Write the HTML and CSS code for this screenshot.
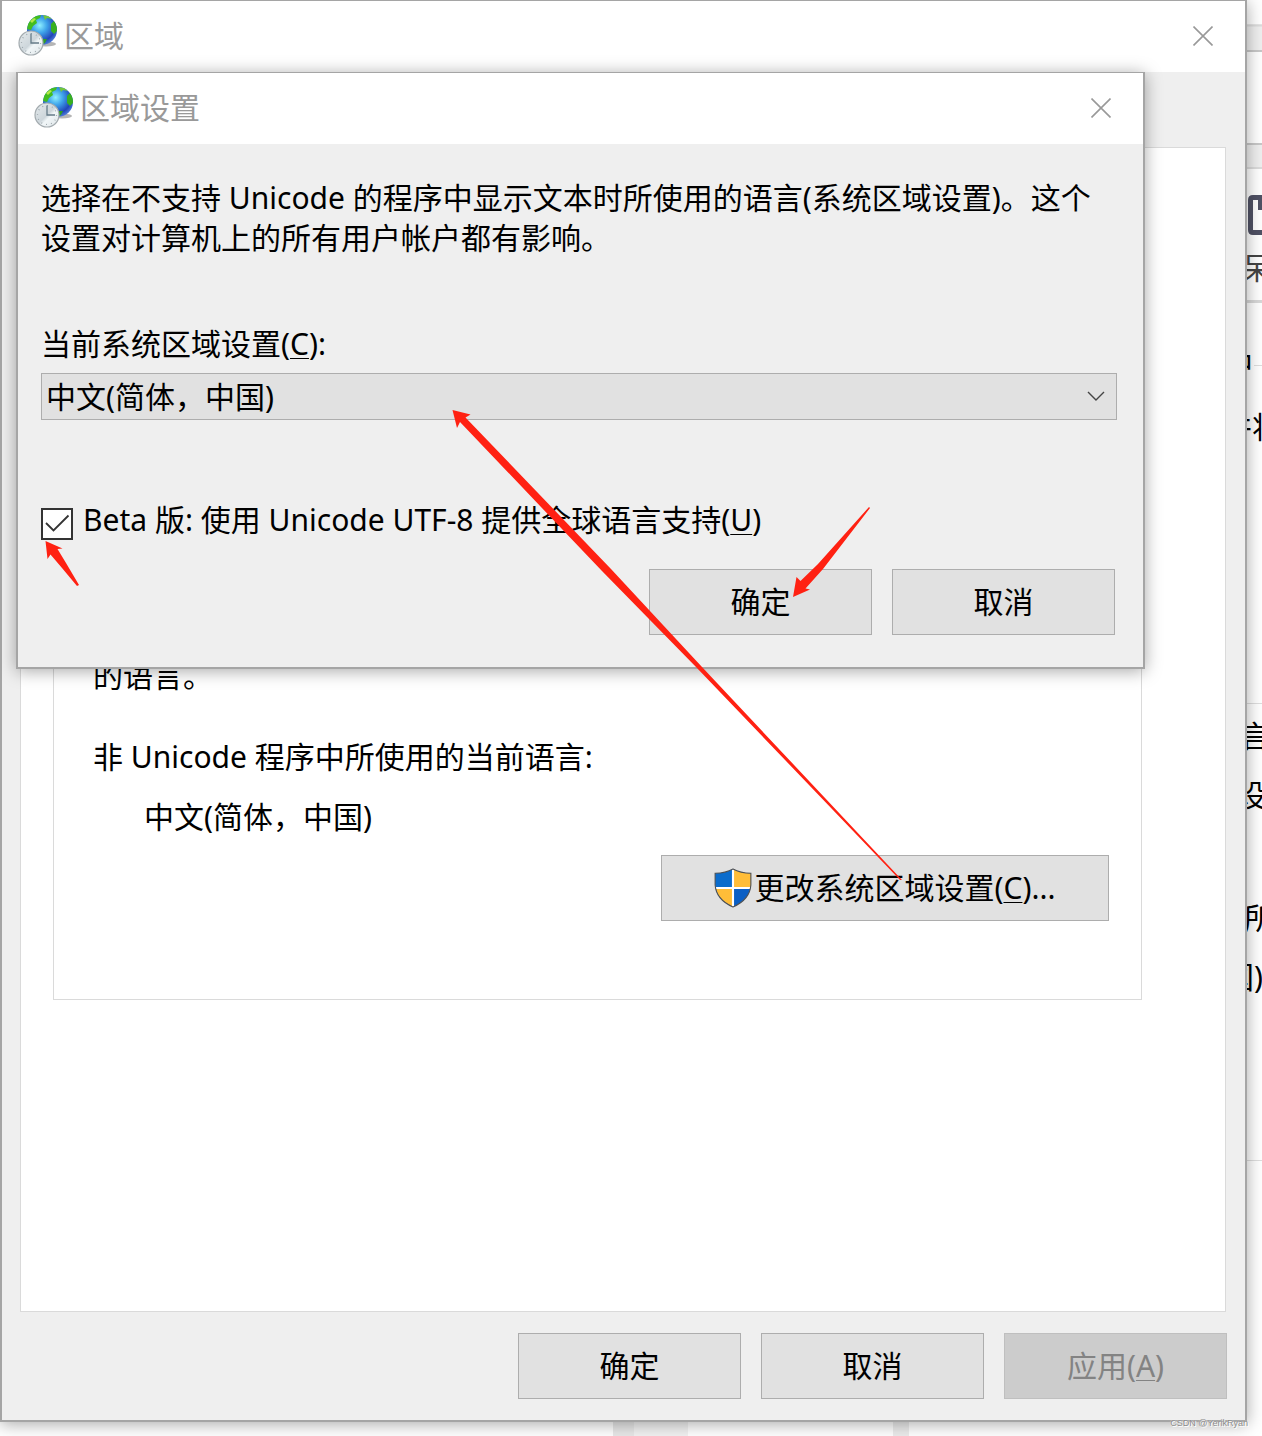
FILE: index.html
```html
<!DOCTYPE html>
<html lang="zh-CN">
<head>
    <meta charset="UTF-8">
    <meta name="viewport" content="width=device-width, initial-scale=1.0">
    <title>区域</title>
    <link rel="stylesheet" href="styles.css">
</head>
<body>
    <svg width="0" height="0" class="defs" aria-hidden="true">
        <defs>
            <radialGradient id="sea" cx="0.42" cy="0.35" r="0.7">
                <stop offset="0" stop-color="#8ff0ff"/>
                <stop offset="0.35" stop-color="#3fa4ea"/>
                <stop offset="0.75" stop-color="#2145b8"/>
                <stop offset="1" stop-color="#5b8be0"/>
            </radialGradient>
            <linearGradient id="face" x1="0" y1="0" x2="1" y2="1">
                <stop offset="0" stop-color="#e6ebed"/>
                <stop offset="0.5" stop-color="#cdd6db"/>
                <stop offset="0.6" stop-color="#f1f6f8"/>
                <stop offset="1" stop-color="#dde4e7"/>
            </linearGradient>
            <clipPath id="ball"><circle cx="24" cy="15" r="15"/></clipPath>
        </defs>
        <symbol id="globe" viewBox="0 0 40 41">
            <ellipse cx="28" cy="29" rx="10" ry="2.5" fill="#b5b5b5"/>
            <circle cx="24" cy="15" r="15" fill="url(#sea)"/>
            <g clip-path="url(#ball)">
                <path d="M9 14 L10 6 L17 1 L23 0 L22 3 L18 5 L19 8 L15 11 L13 15 Z" fill="#43bd1f"/>
                <path d="M25 0 L31 1 L34 4 L29 3 L27 5 Z" fill="#73c63c"/>
                <path d="M33 9 L36 6 L39 10 L39 16 L36 19 L33 16 Z" fill="#38b020"/>
                <path d="M24 24 L29 24 L27 28 L23 30 Z" fill="#2f9e28"/>
                <path d="M12 6 L16 3 L18 4 L14 8 Z" fill="#b3e846"/>
            </g>
            <circle cx="13" cy="28" r="12" fill="url(#face)" stroke="#a3abaf" stroke-width="1.2"/>
            <circle cx="13" cy="28" r="9.5" fill="none" stroke="#8d999f" stroke-width="1.2" stroke-dasharray="0.8 4.17"/>
            <path d="M13 18.5 V28 H21" fill="none" stroke="#657b88" stroke-width="1.3"/>
        </symbol>
        <symbol id="close" viewBox="0 0 20 20">
            <path d="M0.5 0.5 L19.5 19.5 M19.5 0.5 L0.5 19.5" fill="none" stroke="#999" stroke-width="1.6"/>
        </symbol>
    </svg>

    <div class="desktop">
        <!-- page behind the windows -->
        <svg class="behind" width="1262" height="1436" aria-hidden="true">
            <rect x="1240" y="24" width="22" height="28" fill="#efefef"/>
            <path d="M1240 25.5 H1262 M1240 168 H1262" stroke="#dcdcdc" stroke-width="2"/>
            <path d="M1240 51 H1262 M1240 144 H1262" stroke="#c8c8c8" stroke-width="2"/>
            <rect x="1240" y="145" width="22" height="22" fill="#efefef"/>
            <path d="M1270 197.500 H1253 Q1250.500 197.500 1250.500 200 V230 Q1250.500 232.500 1253 232.500 H1270" fill="none" stroke="#505265" stroke-width="5"/>
            <rect x="1258" y="198" width="4" height="12" fill="#505265"/>
            <path d="M1240 301.500 H1262" stroke="#d8d8d8" stroke-width="3"/>
            <path d="M1254 365.500 H1262 M1240 703.500 H1262 M1240 1160.500 H1262" stroke="#dedede"/>
            <text x="1242" y="279" fill="#444">呆</text>
            <text x="1223" y="375">中</text>
            <text x="1222" y="438">并将</text>
            <text x="1240" y="747">言</text>
            <text x="1236" y="806">设</text>
            <text x="1244" y="929">所</text>
            <text x="1224" y="988">国)</text>
            <rect x="613" y="1415" width="75" height="21" fill="#f2f2f2"/>
            <rect x="613" y="1415" width="21" height="21" fill="#e8e8e8"/>
            <rect x="893" y="1415" width="16" height="21" fill="#ececec"/>
        </svg>

        <main class="window">
            <header class="titlebar">
                <svg class="app-icon"><use href="#globe"/></svg>
                <h1>区域</h1>
                <button class="close" aria-label="关闭"><svg><use href="#close"/></svg></button>
            </header>
            <div class="window-body">
                <section class="tab-page">
                    <div class="group">
                        <p>的语言。</p>
                        <p class="current">非 Unicode 程序中所使用的当前语言:</p>
                        <p class="value">中文(简体，中国)</p>
                        <button class="button wide">
                            <svg class="shield" viewBox="0 0 36 38">
                                <path d="M18 1 Q11 5 1 5 V16 Q2 30 18 37 Z" fill="#0b6ccc"/>
                                <path d="M18 1 Q25 5 35 5 V16 Q34 30 18 37 Z" fill="#0b5fc4"/>
                                <path d="M18 1 Q25 5 35 5 V19 H18 Z M18 19 V37 Q4 31 1.500 19 Z" fill="#ffbd38"/>
                                <path d="M18 1 V37 M1 19 H35" stroke="#fff" stroke-width="2"/>
                                <path d="M18 1 Q11 5 1 5 V16 Q2 30 18 37 Q34 30 35 16 V5 Q25 5 18 1 Z" fill="none" stroke="#4c5055"/>
                            </svg>
                            <span>更改系统区域设置(<u>C</u>)...</span>
                        </button>
                    </div>
                </section>
                <div class="actions">
                    <button class="button">确定</button>
                    <button class="button">取消</button>
                    <button class="button" disabled>应用(<u>A</u>)</button>
                </div>
            </div>
        </main>

        <section class="window dialog" role="dialog" aria-labelledby="dialog-title">
            <header class="titlebar">
                <svg class="app-icon"><use href="#globe"/></svg>
                <h2 id="dialog-title">区域设置</h2>
                <button class="close" aria-label="关闭"><svg><use href="#close"/></svg></button>
            </header>
            <div class="dialog-body">
                <p>选择在不支持 Unicode 的程序中显示文本时所使用的语言(系统区域设置)。这个设置对计算机上的所有用户帐户都有影响。</p>
                <label class="field-label" for="locale">当前系统区域设置(<u>C</u>):</label>
                <div class="select-wrap">
                    <select id="locale">
                        <option>中文(简体，中国)</option>
                    </select>
                    <svg class="chevron" viewBox="0 0 18 10"><path d="M1 1 L9 9 L17 1" fill="none" stroke="#444" stroke-width="1.4"/></svg>
                </div>
                <div class="check-row">
                    <span class="check-wrap">
                        <input type="checkbox" id="utf8" checked>
                        <svg class="tick" viewBox="0 0 32 32"><path d="M5 15 L12.500 22.500 L27.500 7.500" fill="none" stroke="#333" stroke-width="1.8"/></svg>
                    </span>
                    <label for="utf8">Beta 版: 使用 Unicode UTF-8 提供全球语言支持(<u>U</u>)</label>
                </div>
                <div class="actions">
                    <button class="button">确定</button>
                    <button class="button">取消</button>
                </div>
            </div>
        </section>

        <!-- red pointer arrows -->
        <svg class="arrows" width="1262" height="1436" aria-hidden="true">
            <path d="M452.500 410 L470.500 414.500 L465.500 417.500 L611 569 L702 667 L902 880 L900 880 L696 667 L602 571 L460 422 L457 428 Z"/>
            <path d="M45.500 541 L62.500 548.500 L57.500 549 L66 563 L79 585 L77 586 L62 568 L50.500 554.500 L47.500 559 Z"/>
            <path d="M793 597 L796.500 577 L800.500 581 L818 564 L869 507 L870 508 L823 569 L805.500 588.500 L810 589.500 Z"/>
        </svg>
        <div class="watermark">CSDN @YerikRyan</div>
    </div>
</body>
</html>
```
FILE: styles.css
```css
* {
    box-sizing: border-box;
}

body {
    margin: 0;
    background-color: #fff;
    color: #000;
    font-family: "Noto Sans", "Noto Sans CJK SC", sans-serif;
    font-size: 30px;
    line-height: 40px;
}

h1, h2, p {
    margin: 0;
    font-size: 30px;
    font-weight: normal;
}

button, select {
    font: inherit;
    color: inherit;
}

u {
    text-decoration-thickness: 1px;
    text-underline-offset: 3px;
}

.defs {
    position: absolute;
}

.desktop {
    position: relative;
    padding: 0 15px 15px 0;
    overflow: hidden;
}

.behind, .arrows {
    position: absolute;
    top: 0;
    left: 0;
}

.arrows {
    fill: #ff2112;
    pointer-events: none;
}

.window {
    position: relative;
    background-color: #efefef;
    border: 1px solid #a5a5a5;
    border-width: 1px 2px 2px;
    box-shadow: 0 2px 16px rgba(0,0,0,0.35);
}

.titlebar {
    display: flex;
    align-items: center;
    height: 71px;
    padding: 0 32px 2px 16px;
    background-color: #fff;
    color: #999;
}

.app-icon {
    width: 40px;
    height: 41px;
    margin-right: 6px;
}

.close {
    display: flex;
    margin-left: auto;
    padding: 0;
    border: none;
    background: none;
}

.close svg {
    width: 20px;
    height: 20px;
}

.window-body {
    padding: 75px 18px 21px;
}

.window-body .actions {
    margin-top: 21px;
}

.tab-page {
    min-height: 1165px;
    margin-right: 1px;
    padding: 32px 83px 31px 32px;
    background-color: #fff;
    border: 1px solid #dadada;
}

.group {
    display: flex;
    flex-direction: column;
    padding: 475px 32px 78px 39px;
    border: 1px solid #dadada;
}

.current {
    margin-top: 41px;
}

.value {
    margin: 20px 0 18px 51px;
}

.actions {
    display: flex;
    justify-content: flex-end;
    gap: 20px;
}

.button {
    display: flex;
    align-items: center;
    justify-content: center;
    width: 223px;
    height: 66px;
    padding: 0;
    background-color: #e1e1e1;
    border: 1px solid #adadad;
}

.button:disabled {
    background-color: #ccc;
    border-color: #bfbfbf;
    color: #838383;
}

.wide {
    width: 448px;
    align-self: flex-end;
}

.shield {
    width: 38px;
    height: 40px;
    margin-right: 2px;
}

.dialog {
    position: absolute;
    top: 72px;
    left: 16px;
    right: 117px;
}

.dialog-body {
    padding: 34px 26px 32px 23px;
}

.field-label {
    display: block;
    margin-top: 66px;
}

.select-wrap {
    position: relative;
    margin-top: 9px;
}

select {
    display: block;
    appearance: none;
    width: 100%;
    height: 47px;
    padding: 0 4px;
    background-color: #e1e1e1;
    border: 1px solid #adadad;
    border-radius: 0;
}

.chevron {
    position: absolute;
    top: 18px;
    right: 12px;
    width: 18px;
    height: 10px;
    pointer-events: none;
}

.check-row {
    display: flex;
    align-items: flex-end;
    gap: 10px;
    margin-top: 80px;
}

.check-wrap {
    position: relative;
    height: 32px;
}

input[type="checkbox"] {
    display: block;
    appearance: none;
    width: 32px;
    height: 32px;
    margin: 0;
    background-color: #fff;
    border: 2px solid #333;
}

.tick {
    position: absolute;
    top: 0;
    left: 0;
    width: 32px;
    height: 32px;
    pointer-events: none;
}

input:not(:checked) + .tick {
    display: none;
}

.dialog .actions {
    margin-top: 29px;
    padding-right: 2px;
}

.watermark {
    position: absolute;
    right: 14px;
    bottom: 8px;
    color: #888;
    font-family: "Liberation Sans", Arial, sans-serif;
    font-size: 9px;
    line-height: 12px;
    text-shadow: 0 0 1px #fff, 1px 1px 0 #fff;
}
```
